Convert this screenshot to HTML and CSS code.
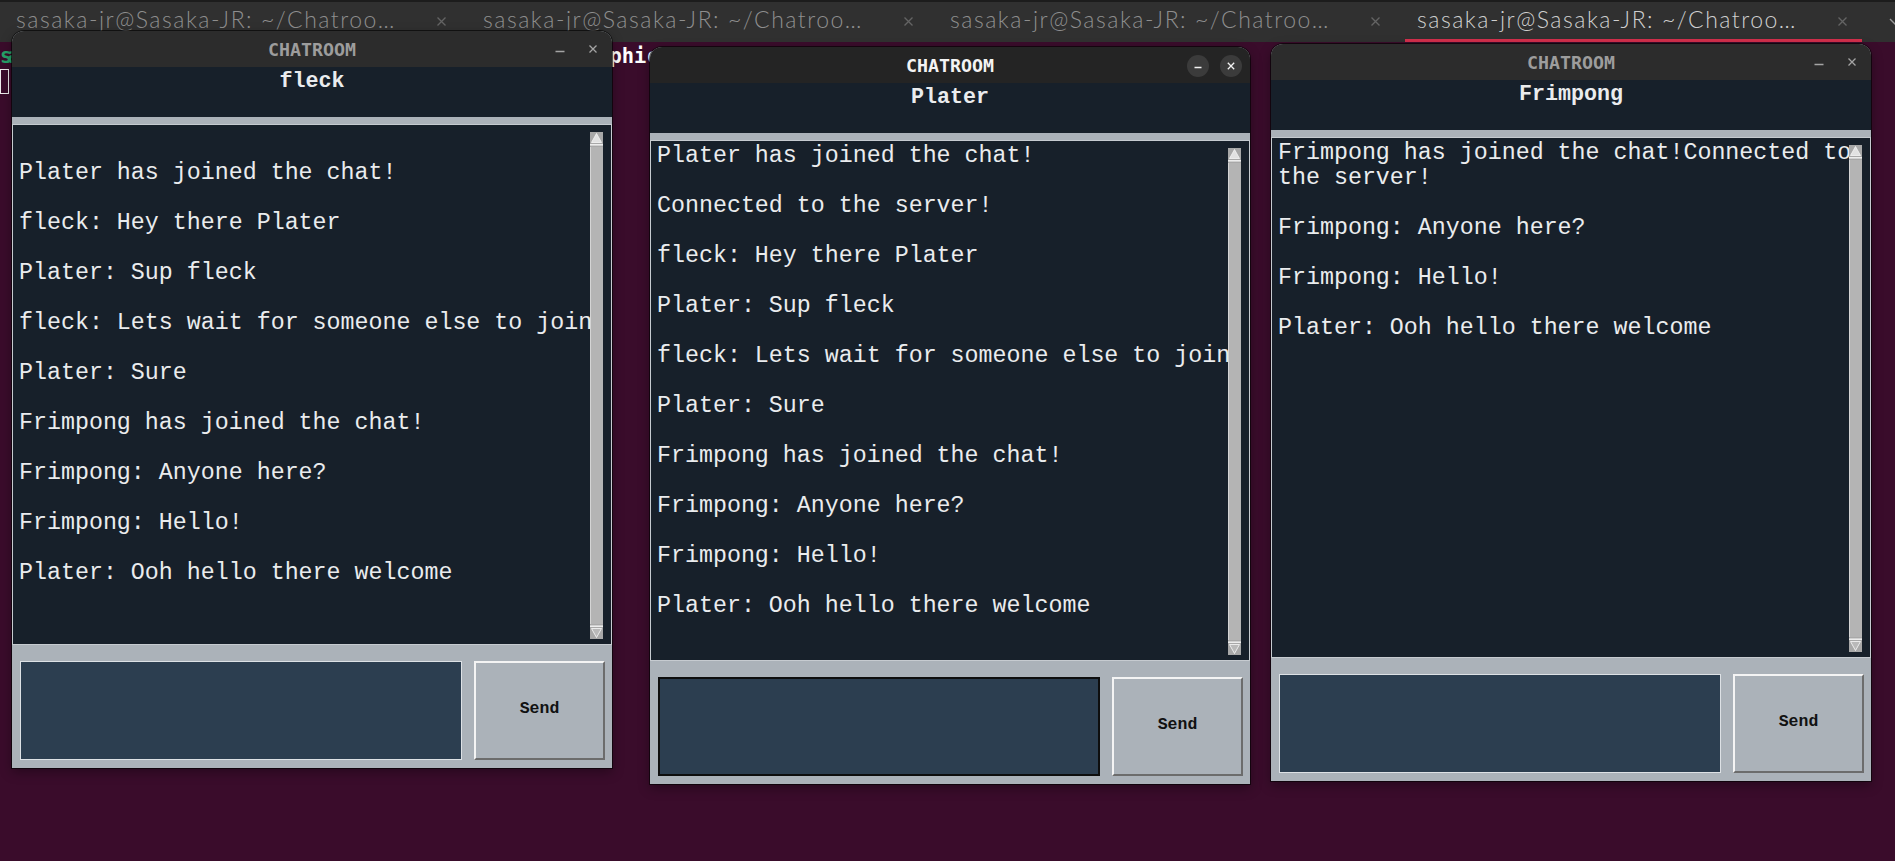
FILE: index.html
```html
<!DOCTYPE html>
<html lang="en">
<head>
<meta charset="utf-8">
<title>Chatroom</title>
<link rel="stylesheet" href="styles.css">
</head>
<body>
<div class="tabbar">
  <div class="tab"><span class="tab-title">sasaka-jr@Sasaka-JR: ~/Chatroo…</span><svg class="tab-close" width="9" height="9" viewBox="0 0 9 9"><path d="M0.5 0.5L8.5 8.5M8.5 0.5L0.5 8.5"/></svg></div>
  <div class="tab"><span class="tab-title">sasaka-jr@Sasaka-JR: ~/Chatroo…</span><svg class="tab-close" width="9" height="9" viewBox="0 0 9 9"><path d="M0.5 0.5L8.5 8.5M8.5 0.5L0.5 8.5"/></svg></div>
  <div class="tab"><span class="tab-title">sasaka-jr@Sasaka-JR: ~/Chatroo…</span><svg class="tab-close" width="9" height="9" viewBox="0 0 9 9"><path d="M0.5 0.5L8.5 8.5M8.5 0.5L0.5 8.5"/></svg></div>
  <div class="tab tab-active"><span class="tab-title">sasaka-jr@Sasaka-JR: ~/Chatroo…</span><svg class="tab-close" width="9" height="9" viewBox="0 0 9 9"><path d="M0.5 0.5L8.5 8.5M8.5 0.5L0.5 8.5"/></svg></div>
  <svg class="tab-more" width="14" height="8" viewBox="0 0 14 8"><path d="M1 1L7 7L13 1"/></svg>
</div>

<div class="terminal">
  <div class="term-line"><span class="prompt">sa</span><span class="cmd">phic</span></div>
  <div class="term-line"><span class="cursor"></span></div>
</div>

<section class="win win-fleck">
  <div class="titlebar">
    <span class="tb-side"></span>
    <span class="tb-title">CHATROOM</span>
    <span class="tb-controls">
      <span class="tb-btn"><svg width="22" height="22" viewBox="0 0 22 22"><path d="M6.5 13.5H15.5"/></svg></span>
      <span class="tb-btn"><svg width="22" height="22" viewBox="0 0 22 22"><path d="M7.5 7.5L14.5 14.5M14.5 7.5L7.5 14.5"/></svg></span>
    </span>
  </div>
  <div class="head">fleck</div>
  <div class="band"></div>
  <div class="chat">
    <div class="log">
      <p class="msg">Plater has joined the chat!</p>
      <p class="msg">fleck: Hey there Plater</p>
      <p class="msg">Plater: Sup fleck</p>
      <p class="msg">fleck: Lets wait for someone else to join</p>
      <p class="msg">Plater: Sure</p>
      <p class="msg">Frimpong has joined the chat!</p>
      <p class="msg">Frimpong: Anyone here?</p>
      <p class="msg">Frimpong: Hello!</p>
      <p class="msg">Plater: Ooh hello there welcome</p>
    </div>
    <div class="scrollbar">
      <svg width="13" height="15" viewBox="0 0 13 15"><rect width="13" height="15" fill="#a8a8a8"/><polygon points="6.5,1.5 11.5,10.5 1.5,10.5" fill="#e2e2e2" stroke="#f6f6f6" stroke-width="0.8"/><rect y="12" width="13" height="1.6" fill="#ececec"/></svg>
      <svg width="13" height="15" viewBox="0 0 13 15"><rect width="13" height="15" fill="#a8a8a8"/><rect y="1.4" width="13" height="1.6" fill="#ececec"/><polygon points="1.5,4.5 11.5,4.5 6.5,13.5" fill="#b9b9b9" stroke="#f2f2f2" stroke-width="0.9"/></svg>
    </div>
  </div>
  <div class="bottom">
    <div class="entry"></div>
    <div class="send">Send</div>
  </div>
</section>

<section class="win win-plater win-active">
  <div class="titlebar">
    <span class="tb-side"></span>
    <span class="tb-title">CHATROOM</span>
    <span class="tb-controls">
      <span class="tb-btn"><svg width="22" height="22" viewBox="0 0 22 22"><path d="M7.5 12.5H14.5"/></svg></span>
      <span class="tb-btn"><svg width="22" height="22" viewBox="0 0 22 22"><path d="M7.8 7.8L14.2 14.2M14.2 7.8L7.8 14.2"/></svg></span>
    </span>
  </div>
  <div class="head">Plater</div>
  <div class="band"></div>
  <div class="chat">
    <div class="log">
      <p class="msg">Plater has joined the chat!</p>
      <p class="msg">Connected to the server!</p>
      <p class="msg">fleck: Hey there Plater</p>
      <p class="msg">Plater: Sup fleck</p>
      <p class="msg">fleck: Lets wait for someone else to join</p>
      <p class="msg">Plater: Sure</p>
      <p class="msg">Frimpong has joined the chat!</p>
      <p class="msg">Frimpong: Anyone here?</p>
      <p class="msg">Frimpong: Hello!</p>
      <p class="msg">Plater: Ooh hello there welcome</p>
    </div>
    <div class="scrollbar">
      <svg width="13" height="15" viewBox="0 0 13 15"><rect width="13" height="15" fill="#a8a8a8"/><polygon points="6.5,1.5 11.5,10.5 1.5,10.5" fill="#e2e2e2" stroke="#f6f6f6" stroke-width="0.8"/><rect y="12" width="13" height="1.6" fill="#ececec"/></svg>
      <svg width="13" height="15" viewBox="0 0 13 15"><rect width="13" height="15" fill="#a8a8a8"/><rect y="1.4" width="13" height="1.6" fill="#ececec"/><polygon points="1.5,4.5 11.5,4.5 6.5,13.5" fill="#b9b9b9" stroke="#f2f2f2" stroke-width="0.9"/></svg>
    </div>
  </div>
  <div class="bottom">
    <div class="entry"></div>
    <div class="send">Send</div>
  </div>
</section>

<section class="win win-frimpong">
  <div class="titlebar">
    <span class="tb-side"></span>
    <span class="tb-title">CHATROOM</span>
    <span class="tb-controls">
      <span class="tb-btn"><svg width="22" height="22" viewBox="0 0 22 22"><path d="M6.5 13.5H15.5"/></svg></span>
      <span class="tb-btn"><svg width="22" height="22" viewBox="0 0 22 22"><path d="M7.5 7.5L14.5 14.5M14.5 7.5L7.5 14.5"/></svg></span>
    </span>
  </div>
  <div class="head">Frimpong</div>
  <div class="band"></div>
  <div class="chat">
    <div class="log">
      <p class="msg">Frimpong has joined the chat!Connected to the server!</p>
      <p class="msg">Frimpong: Anyone here?</p>
      <p class="msg">Frimpong: Hello!</p>
      <p class="msg">Plater: Ooh hello there welcome</p>
    </div>
    <div class="scrollbar">
      <svg width="13" height="15" viewBox="0 0 13 15"><rect width="13" height="15" fill="#a8a8a8"/><polygon points="6.5,1.5 11.5,10.5 1.5,10.5" fill="#e2e2e2" stroke="#f6f6f6" stroke-width="0.8"/><rect y="12" width="13" height="1.6" fill="#ececec"/></svg>
      <svg width="13" height="15" viewBox="0 0 13 15"><rect width="13" height="15" fill="#a8a8a8"/><rect y="1.4" width="13" height="1.6" fill="#ececec"/><polygon points="1.5,4.5 11.5,4.5 6.5,13.5" fill="#b9b9b9" stroke="#f2f2f2" stroke-width="0.9"/></svg>
    </div>
  </div>
  <div class="bottom">
    <div class="entry"></div>
    <div class="send">Send</div>
  </div>
</section>
</body>
</html>
```

FILE: styles.css
```css
html, body {
  margin: 0;
  padding: 0;
}

body {
  width: 1895px;
  height: 861px;
  overflow: hidden;
  position: relative;
  background: #3a0c2b;
  font-family: "Liberation Sans", Arial, sans-serif;
}

/* ---------- terminal tab bar ---------- */
.tabbar {
  height: 42px;
  box-sizing: border-box;
  border-top: 2px solid #1c1c1c;
  background: #303030;
  display: flex;
  align-items: center;
  gap: 10px;
  padding-left: 4px;
}

.tab {
  flex: none;
  width: 457px;
  height: 40px;
  box-sizing: border-box;
  display: flex;
  align-items: center;
  padding: 0 0 6px 12px;
}

.tab-active {
  box-shadow: inset 0 -3px 0 #d42f4c;
}

.tab-title {
  flex: none;
  width: 410px;
  white-space: nowrap;
  overflow: hidden;
  font-family: Lato, "Open Sans", sans-serif;
  font-weight: 300;
  font-size: 23px;
  letter-spacing: 1.5px;
  color: #8e8e8e;
}

.tab-active .tab-title {
  color: #cfcfcf;
}

.tab-close {
  flex: none;
  margin-left: 11px;
  margin-top: 4px;
  fill: none;
  stroke: #646464;
  stroke-width: 1.3;
}

.tab-more {
  flex: none;
  margin-left: 17px;
  fill: none;
  stroke: #9a9a9a;
  stroke-width: 1.4;
}

/* ---------- terminal contents behind the windows ---------- */
.terminal {
  padding-top: 2px;
  font-family: "DejaVu Sans Mono", monospace;
  font-weight: bold;
  font-size: 20.4px;
  line-height: 25px;
}

.term-line {
  height: 25px;
  display: flex;
  white-space: pre;
}

.prompt {
  color: #26a269;
  letter-spacing: -5px;
}

.cmd {
  color: #ffffff;
  margin-left: 595px;
}

.cursor {
  width: 9px;
  height: 25px;
  box-sizing: border-box;
  border: 1px solid #ececec;
}

/* ---------- chat windows ---------- */
.win {
  position: absolute;
  width: 600px;
  height: 737px;
  display: flex;
  flex-direction: column;
  background: #abb2b9;
  border-radius: 12px 12px 0 0;
  overflow: hidden;
  box-shadow: 0 0 0 1px rgba(0, 0, 0, 0.6), 0 4px 12px rgba(0, 0, 0, 0.35);
}

.win-fleck { left: 12px; top: 31px; }
.win-plater { left: 650px; top: 47px; }
.win-frimpong { left: 1271px; top: 44px; }

.titlebar {
  flex: none;
  height: 36px;
  display: flex;
  align-items: center;
  background: #2c2c2c;
}

.win-active .titlebar {
  background: #242424;
}

.tb-side {
  flex: none;
  width: 63px;
}

.tb-title {
  flex: 1;
  text-align: center;
  font-family: "DejaVu Sans Mono", monospace;
  font-weight: bold;
  font-size: 18.3px;
  color: #9d9d9d;
}

.win-active .tb-title {
  color: #f4f4f4;
}

.tb-controls {
  flex: none;
  width: 63px;
  box-sizing: border-box;
  padding-right: 8px;
  display: flex;
  justify-content: flex-end;
  gap: 11px;
}

.tb-btn {
  width: 22px;
  height: 22px;
  border-radius: 50%;
  display: flex;
}

.tb-btn svg {
  fill: none;
  stroke: #a4a4a4;
  stroke-width: 1.3;
}

.win-active .tb-btn {
  background: #3b3b3b;
  margin-top: 2px;
}

.win-active .tb-btn svg {
  stroke: #f2f2f2;
}

.head {
  flex: none;
  height: 50px;
  background: #17202a;
  color: #eaecee;
  font-family: "Liberation Mono", "Courier New", monospace;
  font-weight: bold;
  font-size: 21.7px;
  line-height: 30px;
  text-align: center;
}

.band {
  flex: none;
  height: 7px;
}

.chat {
  flex: none;
  height: 521px;
  box-sizing: border-box;
  border: 1px solid #c6cbd0;
  background: #17202a;
  position: relative;
  overflow: hidden;
}

.log {
  padding: 3px 4px 0 6px;
  color: #eaecee;
  font-family: "Liberation Mono", "Courier New", monospace;
  font-size: 23.3px;
  line-height: 25px;
}

.win-fleck .log {
  padding-top: 36px;
}

.msg {
  margin: 0 0 25px;
}

.scrollbar {
  position: absolute;
  top: 7px;
  bottom: 5px;
  right: 8px;
  width: 13px;
  background: #b4b4b4;
  box-shadow: inset 1px 0 0 #d4d4d4;
  display: flex;
  flex-direction: column;
  justify-content: space-between;
}

.scrollbar svg {
  display: block;
}

.bottom {
  flex: 1;
  box-sizing: border-box;
  padding: 16px 7px 8px 8px;
  display: flex;
  gap: 12px;
}

.entry {
  flex: none;
  width: 442px;
  box-sizing: border-box;
  background: #2c3e50;
  border: 1px solid #dde1e5;
}

.win-active .entry {
  border: 2px solid #0e0e0e;
}

.send {
  flex: 1;
  display: flex;
  align-items: center;
  justify-content: center;
  padding-bottom: 5px;
  border: 2px solid;
  border-color: #f4f4f4 #6c6c6c #6c6c6c #f4f4f4;
  font-family: "Liberation Mono", "Courier New", monospace;
  font-weight: bold;
  font-size: 16.5px;
  color: #111111;
}
```
